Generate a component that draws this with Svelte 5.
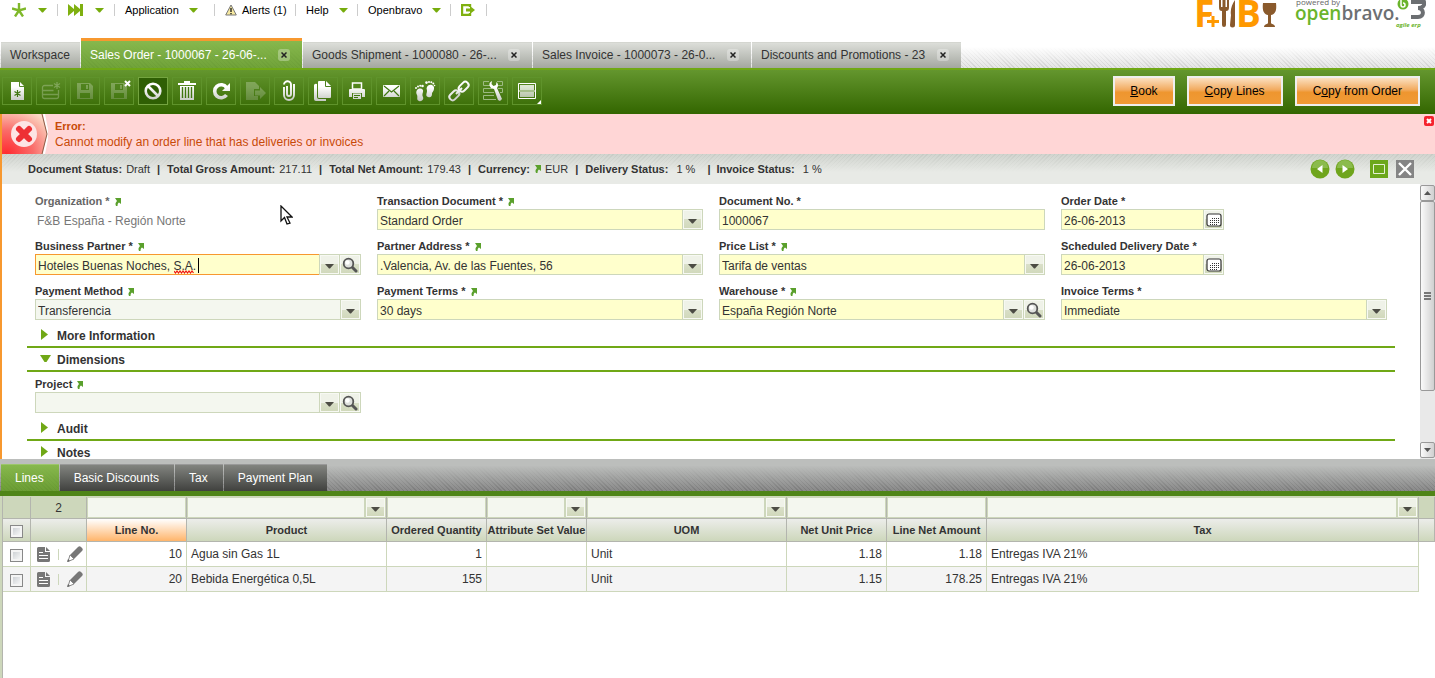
<script>
    const menu = [
        { icon: 'star', label: '', arrow: true, width: 58 },
        { icon: 'forward', label: '', arrow: true, width: 57 },
        { label: 'Application', arrow: true, width: 100 },
        { icon: 'alert', label: 'Alerts (1)', width: 81 },
        { label: 'Help', arrow: true, width: 62 },
        { label: 'Openbravo', arrow: true, width: 93 },
        { icon: 'logout', label: '', width: 36 }
    ]

    const tabs = [
        { title: 'Workspace', width: 79 },
        { title: 'Sales Order - 1000067 - 26-06-...', width: 221, close: true, active: true },
        { title: 'Goods Shipment - 1000080 - 26-...', width: 229, close: true },
        { title: 'Sales Invoice - 1000073 - 26-0...', width: 218, close: true },
        { title: 'Discounts and Promotions - 23', width: 209, close: true }
    ]

    const tools = [
        { icon: 'new', name: 'New' },
        { icon: 'newRow', name: 'New in grid', disabled: true },
        { icon: 'save', name: 'Save', disabled: true },
        { icon: 'saveClose', name: 'Save and close', disabled: true },
        { icon: 'undo', name: 'Cancel', active: true },
        { icon: 'trash', name: 'Delete' },
        { icon: 'refresh', name: 'Refresh' },
        { icon: 'export', name: 'Export', disabled: true },
        { icon: 'attach', name: 'Attachments' },
        { icon: 'copy', name: 'Clone' },
        { icon: 'print', name: 'Print' },
        { icon: 'mail', name: 'Email' },
        { icon: 'feet', name: 'Audit trail' },
        { icon: 'link', name: 'Direct link' },
        { icon: 'process', name: 'Manage' },
        { icon: 'view', name: 'Toggle view', corner: true }
    ]

    const status = [
        { name: 'Document Status:', value: 'Draft' },
        { name: 'Total Gross Amount:', value: '217.11' },
        { name: 'Total Net Amount:', value: '179.43' },
        { name: 'Currency:', value: 'EUR', link: true },
        { name: 'Delivery Status:', value: '1 %', wide: true },
        { name: 'Invoice Status:', value: '1 %', wide: true }
    ]

    const fields = [
        { id: 'org', label: 'Organization', kind: 'readonly', required: true, link: true, value: 'F&B España - Región Norte' },
        { id: 'doctype', label: 'Transaction Document', kind: 'select', required: true, link: true, value: 'Standard Order' },
        { id: 'docno', label: 'Document No.', kind: 'text', required: true, value: '1000067' },
        { id: 'orderdate', label: 'Order Date', kind: 'date', required: true, value: '26-06-2013' },
        { id: 'partner', label: 'Business Partner', kind: 'selector', required: true, link: true, value: 'Hoteles Buenas Noches, S.A.', focus: true },
        { id: 'address', label: 'Partner Address', kind: 'select', required: true, link: true, value: '.Valencia, Av. de las Fuentes, 56' },
        { id: 'pricelist', label: 'Price List', kind: 'select', required: true, link: true, value: 'Tarifa de ventas' },
        { id: 'delivery', label: 'Scheduled Delivery Date', kind: 'date', required: true, value: '26-06-2013' },
        { id: 'method', label: 'Payment Method', kind: 'select', link: true, value: 'Transferencia' },
        { id: 'terms', label: 'Payment Terms', kind: 'select', required: true, link: true, value: '30 days' },
        { id: 'warehouse', label: 'Warehouse', kind: 'selector', required: true, link: true, value: 'España Región Norte' },
        { id: 'invoice', label: 'Invoice Terms', kind: 'select', required: true, value: 'Immediate' }
    ]

    const project = { id: 'project', label: 'Project', kind: 'selector', link: true, value: '' }

    const childTabs = ['Lines', 'Basic Discounts', 'Tax', 'Payment Plan']

    const columns = [
        { name: 'Line No.', key: 'line', num: true, sorted: true },
        { name: 'Product', key: 'product', combo: true },
        { name: 'Ordered Quantity', key: 'qty', num: true },
        { name: 'Attribute Set Value', key: 'attr', combo: true },
        { name: 'UOM', key: 'uom', combo: true },
        { name: 'Net Unit Price', key: 'price', num: true },
        { name: 'Line Net Amount', key: 'net', num: true },
        { name: 'Tax', key: 'tax', combo: true }
    ]

    const rows = [
        { line: '10', product: 'Agua sin Gas 1L', qty: '1', attr: '', uom: 'Unit', price: '1.18', net: '1.18', tax: 'Entregas IVA 21%' },
        { line: '20', product: 'Bebida Energética 0,5L', qty: '155', attr: '', uom: 'Unit', price: '1.15', net: '178.25', tax: 'Entregas IVA 21%' }
    ]

    const floppy = '<path d="M2 2h13l3 3v13H2z"/><path d="M6 3h8v6H6zM5 12h10v5H5z" fill="#4a801c"/><path d="M11 4h2v4h-2z"/>'

    // toolbar icons, all on a 20x20 grid
    const icons = {
        new: '<path d="M4 1h9l4 4v14H4z"/><path d="M12.500 1v4.500H17" fill="none" stroke="#57892b"/><path d="M10.500 9v7M7.500 10.500l6 4M13.500 10.500l-6 4" stroke="#3f7610" stroke-width="1.200"/>',
        newRow: '<g fill="none" stroke="#fff" stroke-width="1.300"><path d="M12 4.500H3.500a2 2 0 0 0-2 2v9a2 2 0 0 0 2 2h12a2 2 0 0 0 2-2V9M1.500 9.500h11M1.500 13.500h16M16 1v7M13 2.500l6 4M19 2.500l-6 4"/></g>',
        save: floppy,
        saveClose: floppy,
        undo: '<circle cx="10" cy="10" r="7.300" fill="none" stroke="url(#metal)" stroke-width="2.600"/><path d="M5 5l10 10" stroke="url(#metal)" stroke-width="2.600"/>',
        trash: '<path d="M7 2V0h6v2h6v2H1V2zM3 5h14v14H3z"/><path d="M5.500 6v11M8.500 6v11M11.500 6v11M14.500 6v11" stroke="#3f7610" stroke-width="1.400"/>',
        refresh: '<path d="M15.500 14A6.500 6.500 0 1 1 15.500 6.500" fill="none" stroke="url(#metal)" stroke-width="3.600"/><path d="M19 2v8h-8z"/>',
        export: '<path d="M1 1h9l4 4v3H9v7h4v4H1z"/><path d="M10 9.500h5V6l6 6-6 6v-3.500h-5z"/>',
        attach: '<path d="M8 5v8a2 2 0 0 0 4 0V4a3.500 3.500 0 0 0-7-.5M15 3v11a5 5 0 0 1-10 0V6" fill="none" stroke="url(#metal)" stroke-width="1.900"/>',
        copy: '<path d="M1 5v13a2 2 0 0 0 2 2h10v-2H6a2 2 0 0 1-2-2V3a2 2 0 0 0-3 2z"/><path d="M5 1a1 1 0 0 1 1-1h7l5 5v11a1 1 0 0 1-1 1H6a1 1 0 0 1-1-1z"/><path d="M12.500 0v5.500H18" fill="none" stroke="#4a801c"/>',
        print: '<path d="M5.500 2h9v6h-9z" fill="none" stroke="url(#metal)" stroke-width="1.500"/><path d="M2 9a1 1 0 0 1 1-1h14a1 1 0 0 1 1 1v7h-3v-4H5v4H2zM6 12.500h8V18H6z"/><path d="M7 14.500h6M7 16.500h4" stroke="#3f7610"/>',
        mail: '<rect x="2" y="4" width="17" height="12" rx="1"/><path d="M3 5l7.500 6L18 5M3 15l5-5M18 15l-5-5" fill="none" stroke="#3f7610" stroke-width="1.200"/>',
        feet: '<path d="M2 9c3-3 7-1 6 2-.5 2-1 3 0 5s-1 5-4 4-1-4-2-6-1-3 0-5zM12 6c2-4 8-2 7 2-.5 3-2 3-2 5s-1 4-4 3-1-4-1-6-1-2 0-4z"/><circle cx="1" cy="7" r="1"/><circle cx="3" cy="5.500" r="1"/><circle cx="5.200" cy="4.800" r="1"/><circle cx="7.500" cy="5" r="1.300"/><circle cx="11.500" cy="1.600" r="1.300"/><circle cx="14" cy="1" r="1"/><circle cx="16.300" cy="1.300" r="1"/><circle cx="18.300" cy="2.500" r="1"/><circle cx="19.500" cy="4.500" r=".8"/>',
        link: '<g fill="none" stroke="url(#metal)" stroke-width="2"><rect x="9" y="2.500" width="11" height="6.500" rx="3" transform="rotate(-45 14.500 5.500)"/><rect x="0" y="11" width="11" height="6.500" rx="3" transform="rotate(-45 5.500 14.500)"/><path d="M7 13l6-6"/></g>',
        process: '<g fill="none" stroke="#9dba82"><path d="M6 .5H.5v4H7M14 .5h5.500v4H15M9 7.500H.5v4H11M15 7.500h4.500v4H17M11 14.500H.5v4H13"/></g><path d="M9 0L8.500 3l2 2 2.500-1 .5-3c2 2 2 4 .5 6l5 11-2 2-2-1-4-11c-3 0-5-3-4.500-5.500C7 1.500 8 .5 9 0z"/>',
        view: '<path d="M1.500 2.500h17v15h-17zM1.500 10h17" fill="none" stroke="#fff"/><path d="M3 4h14v5H3zM3 11h14v5H3z" opacity=".8"/>'
    }
</script>

{#snippet downArrow()}
    <svg class="down" viewBox="0 0 9 5" width="9" height="5"><path d="M0 0h9L5 4.500H4z" /></svg>
{/snippet}

{#snippet linkArrow()}
    <svg class="link-arrow" viewBox="0 0 7 8" width="7" height="8"><path d="M1 0h6v6L5 4.500C4 5 3.500 6 3.500 8H2C1 6 1.500 4.500 3 3z" /></svg>
{/snippet}

{#snippet field(f)}
    <div class="field">
        <label for={f.id} class:muted={f.kind === 'readonly'}>
            {f.label}{f.required ? ' *' : ''}
            {#if f.link}{@render linkArrow()}{/if}
        </label>
        <div class="control {f.kind}" class:required={f.required} class:focus={f.focus}>
            {#if f.kind === 'select'}
                <select id={f.id}><option>{f.value}</option></select>
                <span class="pick over">{@render downArrow()}</span>
            {:else}
                <input id={f.id} type="text" value={f.value} readonly={f.kind === 'readonly'} spellcheck="false" />
            {/if}
            {#if f.kind === 'selector'}
                <button class="pick" aria-label="Open list">{@render downArrow()}</button>
                <button class="pick" aria-label="Search">
                    <svg viewBox="0 0 16 16" width="16" height="16">
                        <path d="M10 10l4 4" stroke="#555" stroke-width="3" stroke-linecap="round" />
                        <circle cx="6.500" cy="6.500" r="4.800" fill="#dfe1de" stroke="#555" stroke-width="1.800" />
                        <circle cx="5.500" cy="5.500" r="2.200" fill="#fff" />
                    </svg>
                </button>
            {/if}
            {#if f.kind === 'date'}
                <button class="pick" aria-label="Calendar">
                    <svg viewBox="0 0 16 14" width="16" height="14">
                        <rect x="1" y="1" width="14" height="12" rx="2" fill="#fff" stroke="#333" stroke-width="1.200" />
                        <path d="M6 5.500h7M4 7.500h9M4 9.500h9M4 11.500h7" stroke="#333" stroke-dasharray="1 1" />
                    </svg>
                </button>
            {/if}
            {#if f.focus}
                <svg class="caret" viewBox="0 0 26 18" width="26" height="18">
                    <path d="M0 15l1.500 2L3 15l1.500 2L6 15l1.500 2L9 15l1.500 2L12 15l1.500 2L15 15l1.500 2L18 15l1.500 2" fill="none" stroke="#f01010" stroke-width="1.200" />
                    <path d="M24.500 2v15" stroke="#000" />
                </svg>
            {/if}
        </div>
    </div>
{/snippet}

{#snippet section(name, open)}
    <button class="section" aria-expanded={open}>
        <svg viewBox="0 0 11 11" width="11" height="11"><path d={open ? 'M0 2h11L6.500 9h-2z' : 'M1 0v11l7-5.500z'} /></svg>
        {name}
    </button>
{/snippet}

<svg class="defs" width="0" height="0" aria-hidden="true">
    <defs>
        <linearGradient id="metal" gradientUnits="userSpaceOnUse" x1="0" y1="0" x2="0" y2="20">
            <stop offset="0.300" stop-color="#fff" />
            <stop offset="1" stop-color="#c4c8c2" />
        </linearGradient>
    </defs>
</svg>

<div class="page">
    <header>
        <nav>
            {#each menu as item}
                <button style:width="{item.width}px" aria-label={item.label || item.icon}>
                    {#if item.icon === 'star'}
                        <svg class="star" viewBox="0 0 14 14" width="14" height="14"><path d="M7 0v7M0 5.500L7 7.500l7-2M3 13.500l4-6 4 6" /></svg>
                    {:else if item.icon === 'forward'}
                        <svg viewBox="0 0 15 12" width="15" height="12"><path d="M0 0l6 5V0l6 5V0h3v12h-3V7l-6 5V7l-6 5z" fill="#7fb010" /></svg>
                    {:else if item.icon === 'alert'}
                        <svg viewBox="0 0 12 12" width="12" height="12"><path d="M6 1l5.300 10H.7z" fill="#f7e9a0" stroke="#777" /><path d="M6 4v4M6 9v1.200" stroke="#222" stroke-width="1.400" /></svg>
                    {:else if item.icon === 'logout'}
                        <svg viewBox="0 0 14 12" width="14" height="12"><path d="M9 3V1H1v10h8V9" fill="none" stroke="#7fb010" stroke-width="2.400" /><path d="M5 4.500h4V2l5 4-5 4V7.500H5z" fill="#7fb010" /></svg>
                    {/if}
                    {#if item.label}<span>{item.label}</span>{/if}
                    {#if item.arrow}{@render downArrow()}{/if}
                </button>
            {/each}
        </nav>
        <svg class="logos" viewBox="0 0 230 30" width="230" height="30">
            <g class="fb">
                <text x="-2" y="27">F</text>
                <text x="40" y="27">B</text>
                <path d="M11 21.500h12M17 16v11" stroke="#fff" stroke-width="6" />
                <path d="M11 21.500h12M17 16v11" stroke="#f90" stroke-width="3" />
                <path d="M23 0v7c0 3 1 4 3 4v14a2 2 0 0 0 4 0V11c2 0 3-1 3-4V0h-2v7h-1.500V0h-3v7H25V0zM39 0c-3 4-5 10-4 15l-1 10a2.500 2.500 0 0 0 5 0zM67 3h13c1 8-1 11-5 12v8c0 1 4 1 4 4H68c0-3 4-3 4-4v-8c-4-1-6-4-5-12z" fill="#8a5a2c" />
            </g>
            <text class="powered" x="100" y="5">powered by</text>
            <text class="brand" x="99" y="20"><tspan class="green">open</tspan><tspan>bravo.</tspan></text>
            <text class="agile" x="200" y="27">agile erp</text>
            <path d="M215 2h13c1 3-1 6-6 6 6 0 7 9 0 9h-7" fill="none" stroke="#6c6f72" stroke-width="4" />
            <circle cx="207" cy="4" r="5.500" fill="#6ab42c" />
            <path d="M205 0v5a2 2 0 1 0 2-2" fill="none" stroke="#fff" stroke-width="1.500" />
        </svg>
    </header>

    <div class="tabs">
        {#each tabs as tab}
            <div class="tab" class:active={tab.active} style:width="{tab.width}px">
                <a href="#tab">{tab.title}</a>
                {#if tab.close}
                    <button aria-label="Close tab"><svg viewBox="0 0 6 6" width="6" height="6"><path d="M0.500 0.500l5 5M5.500 0.500l-5 5" /></svg></button>
                {/if}
            </div>
        {/each}
    </div>

    <div class="toolbar">
        {#each tools as tool}
            <button class="tool" class:active={tool.active} disabled={tool.disabled} aria-label={tool.name}>
                <svg viewBox="0 0 20 20" width="20" height="20">{@html icons[tool.icon]}</svg>
                {#if tool.icon === 'saveClose'}
                    <svg class="badge" viewBox="0 0 7 7" width="7" height="7"><path d="M1 1l5 5M6 1l-5 5" /></svg>
                {/if}
                {#if tool.corner}<i></i>{/if}
            </button>
        {/each}
        <div class="actions">
            <button class="book"><u>B</u>ook</button>
            <button><u>C</u>opy Lines</button>
            <button>C<u>o</u>py from Order</button>
        </div>
    </div>

    <div class="record">
        <div class="error">
            <svg viewBox="0 0 46 40" width="46" height="40">
                <defs>
                    <radialGradient id="alarm" cx="0.100" cy="1" r="1.200">
                        <stop offset="0" stop-color="#ff2a2f" />
                        <stop offset="0.500" stop-color="#fa6d6a" />
                        <stop offset="1" stop-color="#fbd8c4" />
                    </radialGradient>
                </defs>
                <path d="M0 0h40l5 20-5 20H0z" fill="url(#alarm)" />
                <path d="M42 0l4 20-4 20" fill="none" stroke="#fff" stroke-width="2" />
                <path d="M40 0l5 20-5 20" fill="none" stroke="#8c5a44" />
                <circle cx="22" cy="20" r="13" fill="#fde4e4" />
                <path d="M17 15l10 10M27 15L17 25" stroke="#ee3035" stroke-width="6" stroke-linecap="round" />
            </svg>
            <p><strong>Error:</strong><br />Cannot modify an order line that has deliveries or invoices</p>
            <button aria-label="Dismiss"><svg viewBox="0 0 10 10" width="10" height="10"><rect width="10" height="10" rx="2" fill="#f5222d" /><path d="M3 3l4 4M7 3L3 7" stroke="#fff" stroke-width="2" /></svg></button>
        </div>

        <div class="status">
            {#each status as s, i}
                {#if i > 0}<b class="bar">|</b>{/if}
                <span class:wide={s.wide}><b>{s.name}</b>{#if s.link}{@render linkArrow()}{/if}<em>{s.value}</em></span>
            {/each}
            <div class="window-buttons">
                <button aria-label="Previous"><svg viewBox="0 0 20 20" width="20" height="20"><circle cx="10" cy="10" r="9.500" fill="#6fa51c" /><path d="M2 9a8 8 0 0 1 16 0z" fill="#8bbb4c" /><path d="M12.500 6v8L7 10z" fill="#fff" /></svg></button>
                <button aria-label="Next"><svg viewBox="0 0 20 20" width="20" height="20"><circle cx="10" cy="10" r="9.500" fill="#6fa51c" /><path d="M2 9a8 8 0 0 1 16 0z" fill="#8bbb4c" /><path d="M7.500 6v8l5.500-4z" fill="#fff" /></svg></button>
                <button class="maximize" aria-label="Maximize"><svg viewBox="0 0 18 18" width="18" height="18"><path d="M0 0h18v18H0z" fill="#6ca71b" /><path d="M3.500 4.500h11v9h-11z" fill="none" stroke="#e4f0d4" /></svg></button>
                <button aria-label="Close"><svg viewBox="0 0 18 18" width="18" height="18"><path d="M0 0h18v18H0z" fill="#858585" /><path d="M3 3l12 12M15 3L3 15" stroke="#fff" stroke-width="2.400" /></svg></button>
            </div>
        </div>

        <div class="form">
            <div class="form-body">
                <div class="fields">
                    {#each fields as f}
                        {@render field(f)}
                    {/each}
                </div>
                {@render section('More Information', false)}
                {@render section('Dimensions', true)}
                <div class="fields inner">{@render field(project)}</div>
                {@render section('Audit', false)}
                {@render section('Notes', false)}
            </div>
            <div class="scrollbar">
                <button aria-label="Scroll up"><svg viewBox="0 0 7 4" width="7" height="4"><path d="M0 4l3.500-4L7 4z" fill="#555" /></svg></button>
                <div class="thumb"><svg viewBox="0 0 7 9" width="7" height="9"><path d="M0 1h7M0 4h7M0 7h7" stroke="#777" stroke-width="2" /></svg></div>
                <div class="track"></div>
                <button aria-label="Scroll down"><svg viewBox="0 0 7 4" width="7" height="4"><path d="M0 0l3.500 4L7 0z" fill="#555" /></svg></button>
            </div>
            <svg class="pointer" viewBox="0 0 13 20" width="13" height="20"><path d="M1 1v15l3.500-3.500L7 19l3-1-3-6h5z" fill="#fff" stroke="#111" stroke-width="1.300" /></svg>
        </div>
    </div>

    <div class="lines">
        <div class="child-tabs">
            {#each childTabs as name, i}
                <a href="#child" class:active={i === 0}>{name}</a>
            {/each}
        </div>
        <div class="grid">
            <table>
                <colgroup>
                    <col class="w28" /><col class="w56" /><col class="w100" /><col class="w200" /><col class="w100" /><col class="w100" />
                    <col class="w200" /><col class="w100" /><col class="w100" /><col /><col class="w16" />
                </colgroup>
                <thead>
                    <tr class="filters">
                        <td></td>
                        <td class="count">2</td>
                        {#each columns as col}
                            <td class="filter">
                                <div>
                                    <input type="text" aria-label="Filter {col.name}" />
                                    {#if col.combo}<button class="pick" aria-label="Filter list">{@render downArrow()}</button>{/if}
                                </div>
                            </td>
                        {/each}
                        <td></td>
                    </tr>
                    <tr class="heads">
                        <th><input type="checkbox" aria-label="Select all" /></th>
                        <th></th>
                        {#each columns as col}
                            <th class:sorted={col.sorted}>{col.name}</th>
                        {/each}
                        <th></th>
                    </tr>
                </thead>
                <tbody>
                    {#each rows as row}
                        <tr>
                            <td class="check"><input type="checkbox" aria-label="Select line {row.line}" /></td>
                            <td>
                                <div class="row-tools">
                                    <button aria-label="Open in form"><svg viewBox="0 0 13 15" width="13" height="15"><path d="M0 1.500A1.500 1.500 0 0 1 1.500 0H8v5h5v8.500a1.500 1.500 0 0 1-1.500 1.500h-10A1.500 1.500 0 0 1 0 13.500zM9 0l4 4H9z" fill="#777" /><path d="M2 5.500h4M2 8.500h9M2 11.500h9" stroke="#fff" /></svg></button>
                                    <span></span>
                                    <button aria-label="Edit in grid"><svg viewBox="0 0 16 16" width="16" height="16"><path d="M3 9l8-8c1-1 2-1 3 0l1 1c1 1 1 2 0 3l-8 8z" fill="#777" /><path d="M3 9l4 4-6 2.500z" fill="#fff" stroke="#888" /><path d="M0 16l1-3 2 2z" fill="#666" /></svg></button>
                                </div>
                            </td>
                            {#each columns as col}
                                <td class:num={col.num}>{row[col.key]}</td>
                            {/each}
                            <td class="filler"></td>
                        </tr>
                    {/each}
                </tbody>
            </table>
        </div>
    </div>
</div>

<style>
    :global(body) {
        background: #fff;
        font: 12px/16px "Liberation Sans", Arial, sans-serif;
        color: #333;
    }
    .defs {
        position: absolute;
    }
    .page {
        height: 100vh;
        display: flex;
        flex-direction: column;
        overflow: hidden;
    }
    button, input, select {
        box-sizing: border-box;
        margin: 0;
        padding: 0;
        border: 0;
        font: inherit;
        color: inherit;
        background: none;
    }
    svg {
        display: block;
        flex: none;
    }
    a {
        color: inherit;
        text-decoration: none;
    }

    /* top menu */
    header {
        height: 38px;
        display: flex;
        justify-content: space-between;
        flex: none;
    }
    nav {
        display: flex;
        height: 20px;
        align-items: center;
    }
    nav button {
        display: flex;
        align-items: center;
        gap: 10px;
        height: 12px;
        padding-left: 10px;
        border-right: 1px solid #ccc;
        font-size: 11px;
        line-height: 12px;
        color: #000;
        white-space: nowrap;
    }
    nav button:first-child {
        padding-left: 12px;
        gap: 12px;
    }
    nav button:nth-child(2) {
        gap: 12px;
    }
    nav button:nth-child(4) {
        gap: 5px;
    }
    nav .down {
        fill: #76ac0c;
    }
    .star {
        fill: none;
        stroke: #7fb82a;
        stroke-width: 2.400;
    }
    .logos {
        margin-right: 9px;
    }
    .fb text {
        font: bold 37px "Open Sans", sans-serif;
        fill: #f90;
    }
    .powered {
        font: 8px "Open Sans", sans-serif;
        fill: #666;
    }
    .brand {
        font: 600 19px "Open Sans", sans-serif;
        fill: #6c6f72;
    }
    .brand .green {
        fill: #6ab42c;
    }
    .agile {
        font: italic bold 6px "Open Sans", sans-serif;
        fill: #6ab42c;
    }

    /* window tabs */
    .tabs {
        display: flex;
        align-items: flex-end;
        gap: 1px;
        height: 30px;
        flex: none;
        padding-left: 1px;
        background:
            linear-gradient(#fff 30%, rgba(255, 255, 255, .2)),
            repeating-linear-gradient(45deg, #c4c4c4 0 1px, #dedede 1px 3px);
    }
    .tab {
        box-sizing: border-box;
        display: flex;
        justify-content: space-between;
        align-items: center;
        height: 26px;
        padding: 0 12px 2px 9px;
        border-top: 1px solid #d4d6d0;
        background: linear-gradient(#dcded9, #a4a7a0);
        white-space: nowrap;
    }
    .tab.active {
        height: 30px;
        padding-bottom: 0;
        border-top: 3px solid #f7982f;
        color: #fff;
        background: linear-gradient(#87b84d, rgba(120, 168, 64, .7)), repeating-linear-gradient(45deg, #4e8420 0 1px, #5f962a 1px 3px);
    }
    .tab button {
        display: flex;
        align-items: center;
        justify-content: center;
        width: 12px;
        height: 12px;
        border-radius: 3px;
        background: rgba(255, 255, 255, .3);
    }
    .tab button path {
        stroke: #222;
        stroke-width: 1.500;
    }

    .toolbar {
        box-sizing: border-box;
        display: flex;
        align-items: center;
        gap: 4px;
        height: 46px;
        flex: none;
        padding: 0 15px 2px 2px;
        border-top: 2px solid #70a816;
        background: linear-gradient(#64962e, #336600);
    }
    .tool {
        position: relative;
        display: flex;
        align-items: center;
        justify-content: center;
        width: 30px;
        height: 28px;
        border: 1px solid #5f932b;
    }
    .tool svg {
        fill: url(#metal);
        overflow: visible;
    }
    .tool:disabled > svg:first-child {
        opacity: .25;
    }
    .tool.active {
        background: #2f5f04;
        border-color: #74a440;
    }
    .tool .badge {
        position: absolute;
        top: 2px;
        right: 2px;
        stroke: #fff;
        stroke-width: 2;
    }
    .tool i {
        position: absolute;
        right: 0;
        bottom: 0;
        border: 2px solid #fff;
        border-top-color: transparent;
        border-left-color: transparent;
    }
    .actions {
        display: flex;
        gap: 12px;
        margin-left: auto;
    }
    .actions button {
        height: 30px;
        padding: 0 16px;
        border: 2px solid #eee;
        color: #000;
        background: linear-gradient(#fbe0c0, #f2ab60 45%, #ee962f 55%, #f09a36);
    }
    .actions .book {
        padding: 0 15px;
    }

    /* message and status line */
    .record {
        box-sizing: border-box;
        display: flex;
        flex-direction: column;
        flex: 345 1 0;
        min-height: 0;
        border-left: 2px solid #f7982f;
    }
    .error {
        display: flex;
        height: 40px;
        flex: none;
        background: #ffd6d6;
        color: #c84a08;
    }
    .error p {
        flex: 1;
        margin: 4px 0 0 7px;
    }
    .error strong {
        font-size: 11px;
        font-weight: bold;
    }
    .error button {
        align-self: flex-start;
        margin: 2px 1px 0 0;
    }
    .status {
        display: flex;
        align-items: center;
        height: 30px;
        flex: none;
        padding: 0 21px 0 26px;
        font-size: 11px;
        background:
            linear-gradient(rgba(198, 202, 196, .7), #e8eae6 60%),
            repeating-linear-gradient(135deg, #c6cac4 0 1px, #e8eae6 1px 3px);
        white-space: nowrap;
    }
    .status span {
        display: flex;
        align-items: center;
        gap: 4px;
    }
    .status span.wide {
        gap: 8px;
    }
    .status em {
        font-style: normal;
    }
    .status .bar {
        margin: 0 7px;
    }
    .wide + .bar {
        margin: 0 6px 0 12px;
    }
    .window-buttons {
        display: flex;
        align-items: center;
        gap: 5px;
        margin-left: auto;
    }
    .window-buttons .maximize {
        margin: 0 3px 0 10px;
    }
    .link-arrow {
        display: inline-block;
        fill: #5aa02c;
    }

    /* form */
    .form {
        position: relative;
        display: flex;
        flex: 1;
        min-height: 0;
    }
    .form-body {
        flex: 1;
        padding: 9px 25px 0;
        overflow: hidden;
    }
    .fields {
        display: grid;
        grid-template-columns: repeat(4, 1fr);
        gap: 8px 16px;
        padding: 0 8px 4px;
    }
    .fields.inner {
        padding-top: 4px;
    }
    .field label {
        display: block;
        height: 16px;
        font-size: 11px;
        font-weight: bold;
        white-space: nowrap;
    }
    .field label.muted {
        color: #666;
    }
    .field .link-arrow {
        margin-left: 1px;
        vertical-align: -1px;
    }
    .control {
        position: relative;
        box-sizing: border-box;
        display: flex;
        height: 21px;
        border: 1px solid #cdd7bb;
        background: #f4f7ef;
    }
    .control.required {
        background: #ffffcc;
    }
    .control.readonly {
        border-color: transparent;
        background: none;
        color: #777;
    }
    .control.date {
        width: 50%;
    }
    .control input, .control select {
        flex: 1;
        min-width: 0;
        padding: 3px 2px 0;
        outline: 0;
        appearance: none;
    }
    .control.readonly input {
        padding-left: 1px;
    }
    .control.focus input {
        margin: -1px 0 -1px -1px;
        border: 1px solid #f7982f;
        border-right: 0;
    }
    .pick {
        box-sizing: border-box;
        display: flex;
        align-items: center;
        justify-content: center;
        flex: none;
        width: 20px;
        border-left: 1px solid #cdd7bb;
        background: linear-gradient(#eff2e8 50%, #d9dfc8 50%, #d0d8ba);
        box-shadow: inset 0 0 0 1px #f7f9f3;
    }
    .pick + .pick {
        width: 21px;
    }
    .pick .down {
        fill: #4c4c44;
        margin-top: 3px;
    }
    .pick.over {
        position: absolute;
        top: 0;
        right: 0;
        bottom: 0;
        pointer-events: none;
    }
    .caret {
        position: absolute;
        top: 1px;
        left: 138px;
        pointer-events: none;
    }
    .section {
        display: flex;
        align-items: center;
        gap: 6px;
        width: 100%;
        height: 24px;
        padding: 2px 0 0 13px;
        border-bottom: 2px solid #70a816;
        font-weight: bold;
    }
    .section svg {
        fill: #70a816;
        margin-bottom: 3px;
    }
    .scrollbar {
        display: flex;
        flex-direction: column;
        width: 15px;
        padding: 1px 0;
        background: #e9e9e9;
    }
    .scrollbar button, .thumb {
        box-sizing: border-box;
        display: flex;
        align-items: center;
        justify-content: center;
        height: 16px;
        border: 1px solid #999;
        border-radius: 2px;
        background: linear-gradient(to right, #fafafa, #d0d0d0);
    }
    .scrollbar .thumb {
        flex: 190;
    }
    .track {
        flex: 51;
    }
    .pointer {
        position: absolute;
        top: 21px;
        left: 278px;
    }

    /* child tabs and grid */
    .lines {
        display: flex;
        flex-direction: column;
        flex: 219 1 0;
        min-height: 0;
    }
    .child-tabs {
        box-sizing: border-box;
        display: flex;
        align-items: flex-end;
        gap: 1px;
        height: 37px;
        flex: none;
        padding-left: 1px;
        border-bottom: 5px solid #4f8518;
        background:
            linear-gradient(rgba(188, 190, 188, 1) 20%, rgba(140, 140, 140, .6)),
            repeating-linear-gradient(45deg, #5c5c5c 0 1px, #848484 1px 3px);
    }
    .child-tabs a {
        height: 26px;
        padding: 0 15px 0 14px;
        border-top: 1px solid #999;
        line-height: 27px;
        color: #fff;
        background: linear-gradient(#82847f, #40413e);
    }
    .child-tabs a.active {
        background: linear-gradient(#87b84d, rgba(112, 160, 56, .7)), repeating-linear-gradient(45deg, #4e8420 0 1px, #5f962a 1px 3px);
        border-top-color: #9cc66a;
    }
    .grid {
        flex: 1;
        padding-top: 1px;
        border-left: 2px solid #cdd7bb;
        background: linear-gradient(#b3b5ae, #b3b5ae) 0 0 / 1px 100% no-repeat, linear-gradient(#cdd7bb, #cdd7bb) 0 0 / 100% 1px no-repeat;
    }
    table {
        width: calc(100% - 1px);
        margin-left: 1px;
        table-layout: fixed;
        border-collapse: separate;
        border-spacing: 0;
    }
    .w16 { width: 16px; }
    .w28 { width: 28px; }
    .w56 { width: 56px; }
    .w100 { width: 100px; }
    .w200 { width: 200px; }
    td, th {
        box-sizing: border-box;
        padding: 0;
        border-right: 1px solid #cdd7bb;
        border-bottom: 1px solid #cdd7bb;
        white-space: nowrap;
    }
    .filters td {
        height: 22px;
        border-color: #b3b5ae;
        background: #cdd7bb;
        text-align: center;
    }
    .filter div {
        display: flex;
        height: 19px;
        margin: 0 1px 0;
        background: #f4f7ef;
    }
    .filter input {
        flex: 1;
        min-width: 0;
    }
    .filter .pick {
        width: 21px;
        border-left-width: 2px;
    }
    .heads th {
        height: 23px;
        border-color: #b3b5ae;
        font-size: 11px;
        background: linear-gradient(#ecedea, #cdd7bb);
    }
    .heads th.sorted {
        background: linear-gradient(#fff, #ffb56b);
    }
    tbody td {
        height: 25px;
        padding: 0 4px;
    }
    tbody td:nth-child(-n+2) {
        padding: 0;
    }
    tbody tr:nth-child(even) td {
        background: #f4f4f4;
    }
    tbody td.filler, tbody tr:nth-child(even) td.filler {
        border: 0;
        background: #fff;
    }
    .num {
        text-align: right;
    }
    input[type="checkbox"] {
        appearance: none;
        display: block;
        width: 13px;
        height: 13px;
        margin: 2px auto 0;
        border: 1px solid #888;
        background: linear-gradient(135deg, #c4c8cc, #fff);
        box-shadow: inset 0 0 0 2px #f4f4f4;
    }
    .row-tools {
        display: flex;
        align-items: center;
        gap: 8px;
        padding-left: 6px;
    }
    .row-tools span {
        height: 11px;
        border-left: 1px solid #cdd7bb;
    }
</style>
